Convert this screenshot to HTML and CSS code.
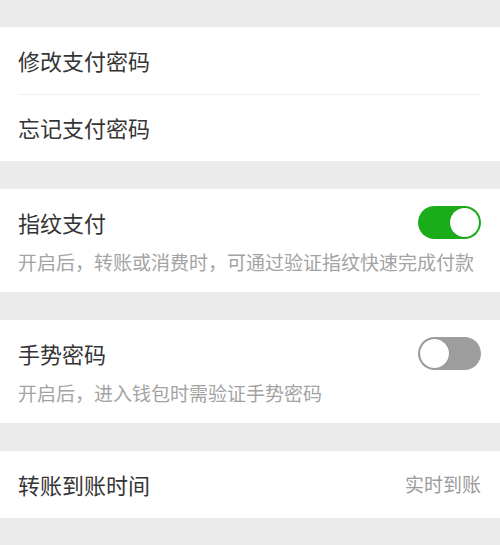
FILE: index.html
```html
<!DOCTYPE html>
<html lang="zh-CN">
<head>
<meta charset="utf-8">
<title>支付安全</title>
<link rel="stylesheet" href="styles.css">
</head>
<body>
<div class="page">
  <div class="group">
    <div class="cell"><span class="title">修改支付密码</span></div>
    <div class="cell"><span class="title">忘记支付密码</span></div>
  </div>

  <div class="group switch-group">
    <div class="head">
      <span class="title">指纹支付</span>
      <span class="toggle on"><span class="knob"></span></span>
    </div>
    <div class="desc">开启后，转账或消费时，可通过验证指纹快速完成付款</div>
  </div>

  <div class="group switch-group">
    <div class="head">
      <span class="title">手势密码</span>
      <span class="toggle off"><span class="knob"></span></span>
    </div>
    <div class="desc">开启后，进入钱包时需验证手势密码</div>
  </div>

  <div class="group">
    <div class="cell">
      <span class="title">转账到账时间</span>
      <span class="value">实时到账</span>
    </div>
  </div>
</div>
</body>
</html>
```

FILE: styles.css
```css
html, body {
  margin: 0;
  padding: 0;
  background: #ebebeb;
  font-family: "Noto Sans CJK SC", "Noto Sans", sans-serif;
}

.page {
  width: 500px;
  height: 545px;
  padding-top: 27px;
  box-sizing: border-box;
  overflow: hidden;
}

.group {
  background: #ffffff;
  margin-bottom: 28px;
}

.cell {
  height: 67px;
  margin: 0 19px 0 18px;
  padding-bottom: 2px;
  display: flex;
  align-items: center;
  justify-content: space-between;
  box-sizing: border-box;
}

.cell + .cell {
  border-top: 1px solid #f0f0f0;
}

.title {
  font-size: 22px;
  line-height: 30px;
  color: #353535;
}

.value {
  font-size: 19px;
  line-height: 24px;
  color: #9b9b9b;
}

.switch-group {
  height: 103px;
  padding: 0 19px 0 18px;
  box-sizing: border-box;
}

.head {
  height: 66px;
  display: flex;
  align-items: center;
  justify-content: space-between;
}

.desc {
  font-size: 19px;
  line-height: 14px;
  color: #a3a3a3;
  white-space: nowrap;
}

.toggle {
  width: 63px;
  height: 33px;
  border-radius: 17px;
  box-sizing: border-box;
  padding: 2px;
  display: flex;
  align-items: center;
}

.toggle.on {
  background: #1aad19;
  justify-content: flex-end;
}

.toggle.off {
  background: #9d9d9d;
  justify-content: flex-start;
}

.knob {
  width: 29px;
  height: 29px;
  border-radius: 50%;
  background: #ffffff;
  box-shadow: 0 0 0 0.5px rgba(0, 0, 0, 0.15);
}
```
